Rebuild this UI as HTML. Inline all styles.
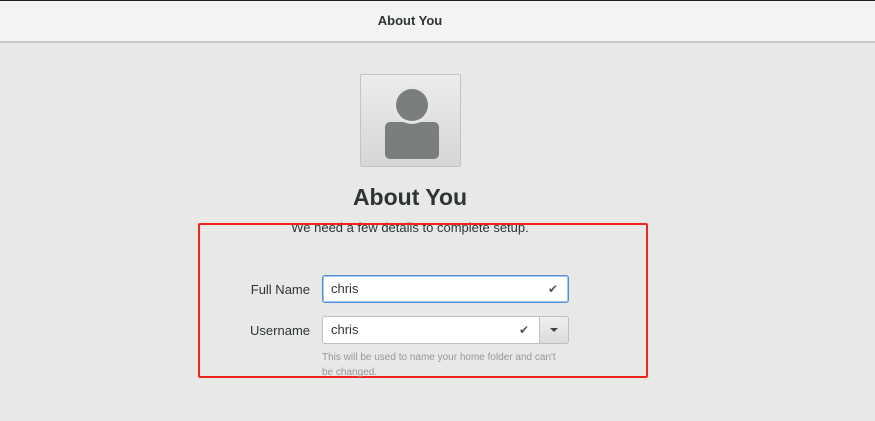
<!DOCTYPE html>
<html><head><style>
body{margin:0;width:875px;height:421px;background:#e8e8e7;font-family:"Liberation Sans",sans-serif;position:relative;overflow:hidden;color:#2e3436}
.hdr{position:absolute;left:0;top:0;width:820px;height:40px;text-align:center;font-size:13px;font-weight:bold;line-height:40px}
.hbg{position:absolute;left:0;top:0;width:875px;height:40px;background:#f3f3f3;border-top:1px solid #222;border-bottom:2px solid #c8c8c6}
.av{position:absolute;left:360px;top:74px;width:99px;height:91px;border:1px solid #c4c4c2;border-radius:2px;background:linear-gradient(#ececeb,#d6d6d5)}
.t{position:absolute;left:0;width:820px;text-align:center}
.lab{position:absolute;width:100px;left:210px;text-align:right;font-size:13px}
.e{position:absolute;left:322px;background:#fff;border:1px solid #bfbfbd;border-radius:3px;font-size:13px;line-height:26px;padding-left:8px;box-sizing:border-box;width:247px;height:28px}
.ck{position:absolute;font-size:12px;color:#555}
</style></head><body>
<div class="hbg"></div>
<div class="hdr" style="top:1px">About You</div>
<div class="av"><svg width="99" height="91"><rect x="24" y="47" width="54" height="37" rx="5" fill="#7a7e7f"/><circle cx="51" cy="30" r="19" fill="#e6e6e5"/><circle cx="51" cy="30" r="16" fill="#7a7e7f"/></svg></div>
<div class="t" style="top:184px;font-size:23px;font-weight:bold;">About You</div>
<div class="t" style="top:220px;font-size:13px;">We need a few details to complete setup.</div>
<div style="position:absolute;left:198px;top:223px;width:446px;height:151px;border:2px solid #f0261e;border-radius:2px"></div>
<div class="lab" style="top:282px">Full Name</div>
<div class="e" style="top:275px;border-color:#4a90d9;box-shadow:0 0 0 1px #a9c8ea inset">chris</div>
<div class="ck" style="left:548px;top:282px">✔</div>
<div class="lab" style="top:323px">Username</div>
<div class="e" style="top:316px">chris</div>
<div style="position:absolute;left:539px;top:316px;width:30px;height:28px;border:1px solid #bfbfbd;border-radius:0 3px 3px 0;background:linear-gradient(#efefee,#dcdcdb);box-sizing:border-box"><div style="position:absolute;left:10px;top:11px;border-left:4px solid transparent;border-right:4px solid transparent;border-top:4px solid #444"></div></div>
<div class="ck" style="left:519px;top:323px">✔</div>
<div style="position:absolute;left:322px;top:350px;white-space:nowrap;font-size:10px;line-height:15px;color:#979796">This will be used to name your home folder and can't<br>be changed.</div>
</body></html>
